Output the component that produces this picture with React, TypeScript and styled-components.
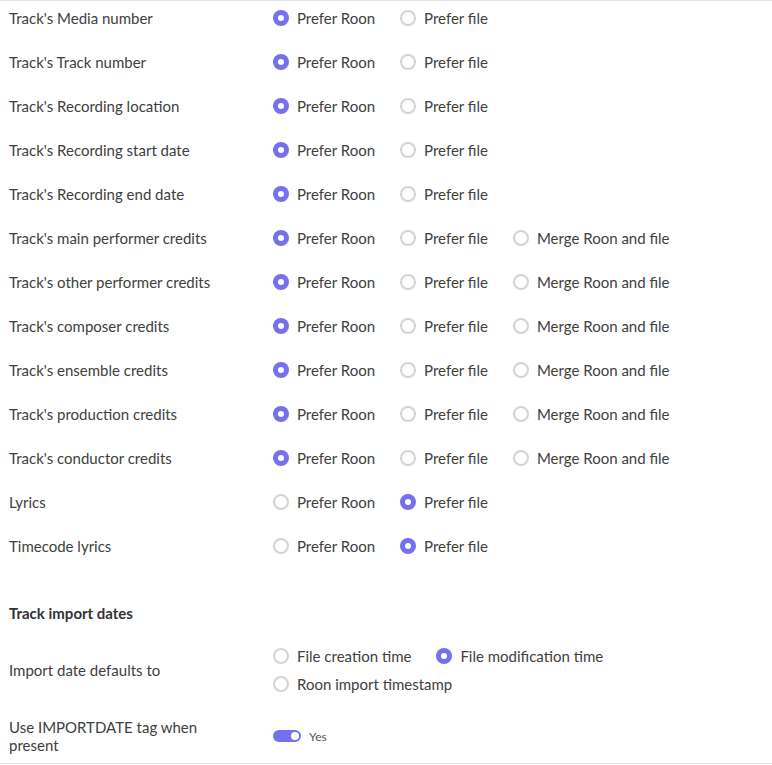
import { useState } from 'react';
import styled, { createGlobalStyle } from 'styled-components';

const GlobalStyle = createGlobalStyle`
  html, body {
    margin: 0;
    padding: 0;
    background: #fff;
  }
  body {
    font-family: Lato, "Open Sans", sans-serif;
    color: #404040;
  }
`;

const Page = styled.div`
  width: 772px;
  border-top: 1px solid #e4e4e4;
  border-bottom: 1px solid #e4e4e4;
  box-sizing: border-box;
`;

const Row = styled.div<{ $top?: number; $bottom?: number }>`
  display: flex;
  align-items: center;
  padding: ${(p) => p.$top ?? 7}px 0 ${(p) => p.$bottom ?? 17}px 9px;
`;

const Label = styled.div<{ $lh?: number }>`
  width: 222px;
  flex: 0 0 222px;
  margin-right: 42px;
  font-size: 15px;
  line-height: ${(p) => p.$lh ?? 20}px;
  color: #404040;
`;

const Options = styled.div<{ $wrap?: boolean }>`
  display: flex;
  flex-wrap: ${(p) => (p.$wrap ? 'wrap' : 'nowrap')};
  width: ${(p) => (p.$wrap ? '360px' : 'auto')};
`;

const Option = styled.label<{ $lh?: number }>`
  display: flex;
  align-items: center;
  gap: 8px;
  margin-right: 25px;
  font-size: 15px;
  line-height: ${(p) => p.$lh ?? 20}px;
  color: #404040;
  cursor: pointer;
  white-space: nowrap;
`;

const Radio = styled.span<{ $on: boolean }>`
  width: 16px;
  height: 16px;
  box-sizing: border-box;
  border-radius: 50%;
  flex: 0 0 16px;
  background: ${(p) => (p.$on ? '#7471ef' : '#fff')};
  border: ${(p) => (p.$on ? 'none' : '2px solid #d4d4d4')};
  display: flex;
  align-items: center;
  justify-content: center;

  &::after {
    content: '';
    width: 6px;
    height: 6px;
    border-radius: 50%;
    background: #fff;
    display: ${(p) => (p.$on ? 'block' : 'none')};
  }
`;

const Heading = styled.div`
  padding: 30px 0 9px 9px;
  font-size: 15px;
  line-height: 20px;
  font-weight: 700;
  color: #333;
`;

const Toggle = styled.span<{ $on: boolean }>`
  width: 28px;
  height: 12px;
  border-radius: 6px;
  background: ${(p) => (p.$on ? '#7471ef' : '#ccc')};
  display: flex;
  align-items: center;
  justify-content: ${(p) => (p.$on ? 'flex-end' : 'flex-start')};
  padding: 0 2px;
  box-sizing: border-box;

  &::after {
    content: '';
    width: 8px;
    height: 8px;
    border-radius: 50%;
    background: #fff;
  }
`;

const ToggleWrap = styled.label`
  display: flex;
  align-items: center;
  gap: 8px;
  font-size: 12px;
  color: #555;
  cursor: pointer;
`;

type Choice = 'roon' | 'file' | 'merge';

const rows: { label: string; merge: boolean; value: Choice }[] = [
  { label: "Track's Media number", merge: false, value: 'roon' },
  { label: "Track's Track number", merge: false, value: 'roon' },
  { label: "Track's Recording location", merge: false, value: 'roon' },
  { label: "Track's Recording start date", merge: false, value: 'roon' },
  { label: "Track's Recording end date", merge: false, value: 'roon' },
  { label: "Track's main performer credits", merge: true, value: 'roon' },
  { label: "Track's other performer credits", merge: true, value: 'roon' },
  { label: "Track's composer credits", merge: true, value: 'roon' },
  { label: "Track's ensemble credits", merge: true, value: 'roon' },
  { label: "Track's production credits", merge: true, value: 'roon' },
  { label: "Track's conductor credits", merge: true, value: 'roon' },
  { label: 'Lyrics', merge: false, value: 'file' },
  { label: 'Timecode lyrics', merge: false, value: 'file' },
];

const importChoices = [
  { key: 'creation', text: 'File creation time' },
  { key: 'modification', text: 'File modification time' },
  { key: 'roon', text: 'Roon import timestamp' },
];

export default function App() {
  const [values, setValues] = useState<Choice[]>(rows.map((r) => r.value));
  const [importDate, setImportDate] = useState('modification');
  const [useTag, setUseTag] = useState(true);

  const pick = (i: number, v: Choice) => {
    setValues((prev) => prev.map((x, j) => (j === i ? v : x)));
  };

  return (
    <>
      <GlobalStyle />
      <Page>
        {rows.map((row, i) => (
          <Row key={row.label}>
            <Label>{row.label}</Label>
            <Options>
              <Option onClick={() => pick(i, 'roon')}>
                <Radio $on={values[i] === 'roon'} />
                Prefer Roon
              </Option>
              <Option onClick={() => pick(i, 'file')}>
                <Radio $on={values[i] === 'file'} />
                Prefer file
              </Option>
              {row.merge && (
                <Option onClick={() => pick(i, 'merge')}>
                  <Radio $on={values[i] === 'merge'} />
                  Merge Roon and file
                </Option>
              )}
            </Options>
          </Row>
        ))}

        <Heading>Track import dates</Heading>

        <Row $top={10} $bottom={10}>
          <Label>Import date defaults to</Label>
          <Options $wrap>
            {importChoices.map((c) => (
              <Option key={c.key} $lh={28} onClick={() => setImportDate(c.key)}>
                <Radio $on={importDate === c.key} />
                {c.text}
              </Option>
            ))}
          </Options>
        </Row>

        <Row $top={10} $bottom={9}>
          <Label $lh={18}>Use IMPORTDATE tag when present</Label>
          <ToggleWrap onClick={() => setUseTag(!useTag)}>
            <Toggle $on={useTag} />
            {useTag ? 'Yes' : 'No'}
          </ToggleWrap>
        </Row>
      </Page>
    </>
  );
}
